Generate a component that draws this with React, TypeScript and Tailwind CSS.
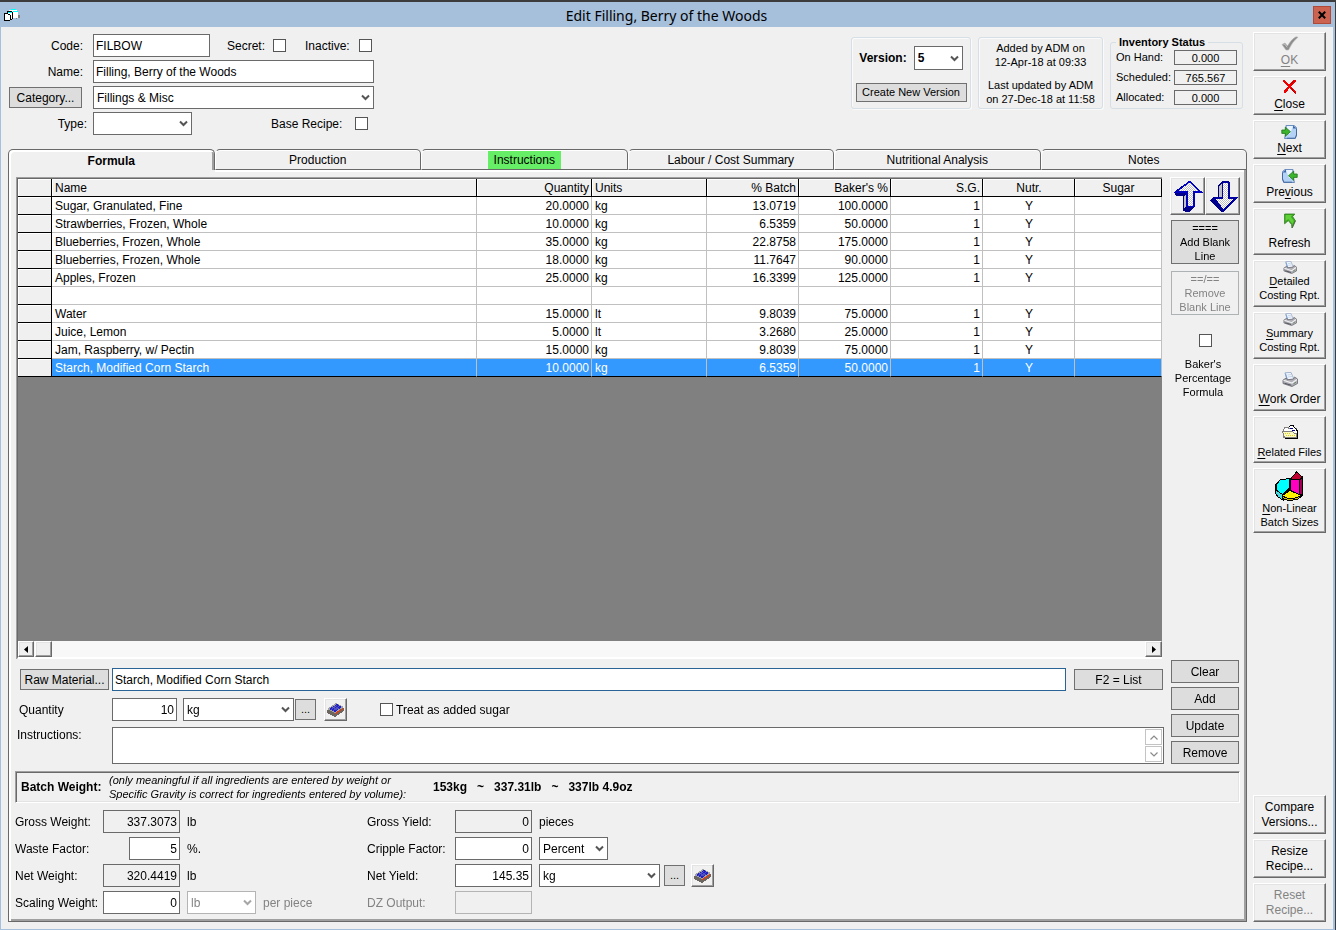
import { useId, type ReactNode } from 'react';
import { clsx } from 'clsx';

const RAISED =
    'border border-t-white border-l-white border-r-[#696969] border-b-[#696969] bg-[#f0f0f0] shadow-[inset_-1px_-1px_#a0a0a0,inset_1px_1px_#e3e3e3]';
const FLAT_BUTTON = 'border border-[#707070] bg-[#dddddd] text-center';
const FIELD = 'h-[23px] min-w-0 border border-[#6a6a6a] bg-white outline-none';

type Ingredient = {
    name: string;
    quantity: string;
    units: string;
    batch: string;
    bakers: string;
};

const INGREDIENTS: (Ingredient | null)[] = [
    { name: 'Sugar, Granulated, Fine', quantity: '20.0000', units: 'kg', batch: '13.0719', bakers: '100.0000' },
    { name: 'Strawberries, Frozen, Whole', quantity: '10.0000', units: 'kg', batch: '6.5359', bakers: '50.0000' },
    { name: 'Blueberries, Frozen, Whole', quantity: '35.0000', units: 'kg', batch: '22.8758', bakers: '175.0000' },
    { name: 'Blueberries, Frozen, Whole', quantity: '18.0000', units: 'kg', batch: '11.7647', bakers: '90.0000' },
    { name: 'Apples, Frozen', quantity: '25.0000', units: 'kg', batch: '16.3399', bakers: '125.0000' },
    null,
    { name: 'Water', quantity: '15.0000', units: 'lt', batch: '9.8039', bakers: '75.0000' },
    { name: 'Juice, Lemon', quantity: '5.0000', units: 'lt', batch: '3.2680', bakers: '25.0000' },
    { name: 'Jam, Raspberry, w/ Pectin', quantity: '15.0000', units: 'kg', batch: '9.8039', bakers: '75.0000' },
    { name: 'Starch, Modified Corn Starch', quantity: '10.0000', units: 'kg', batch: '6.5359', bakers: '50.0000' },
];
const SELECTED_ROW = 9;

const COLUMNS = [
    { title: '', width: 'w-[34px]', align: 'text-left' },
    { title: 'Name', width: '', align: 'text-left' },
    { title: 'Quantity', width: 'w-[115px]', align: 'text-right' },
    { title: 'Units', width: 'w-[115px]', align: 'text-left' },
    { title: '% Batch', width: 'w-[92px]', align: 'text-right' },
    { title: "Baker's %", width: 'w-[92px]', align: 'text-right' },
    { title: 'S.G.', width: 'w-[92px]', align: 'text-right' },
    { title: 'Nutr.', width: 'w-[92px]', align: 'text-center' },
    { title: 'Sugar', width: 'w-[87px]', align: 'text-center' },
];

const TABS = ['Formula', 'Production', 'Instructions', 'Labour / Cost Summary', 'Nutritional Analysis', 'Notes'];

/* ---------- icons ---------- */

function WindowIcon() {
    return (
        <svg width="16" height="14" viewBox="0 0 16 14" shapeRendering="crispEdges">
            <path d="M5 2h8v2h1v6H9V5H5z" fill="#fff" />
            <path d="M7 1h5v1H7zM9 3h5v1H9z" fill="#0ff" />
            <path d="M12 10h1v1h-1zM14 7h2v3h-2z" fill="#808080" />
            <path d="M3 4h5v8H6v1H1V5h2z" fill="#fff" />
            <path d="M3 3h5v1H3zM1 5h2v1H1zM0 5h1v8H0zM1 12h5v1H1zM8 4h1v7H8zM6 11h2v1H6zM3 4h1v2H3zM4 6h2v1H4zM6 7h1v5H6z" fill="#000" />
            <path d="M4 4h4v1H4z" fill="#0ff" />
        </svg>
    );
}

function CheckIcon() {
    return (
        <svg width="18" height="16" viewBox="0 0 18 16">
            <path d="M1 8.500 4 7l2.500 3Q10 3.500 15 .8l2 .4Q11 6 7.500 14L5 14z" fill="#8c8c8c" stroke="#b5b5b5" strokeWidth=".6" />
            <path d="m2.500 8.600 1.300-.5 2.400 3.200" fill="none" stroke="#c9c9c9" />
        </svg>
    );
}

function CrossIcon() {
    return (
        <svg width="14" height="14" viewBox="0 0 14 14" shapeRendering="crispEdges">
            <path d="M0 0h2l4 4.500L11 0h2v1L8 6l5 6v2h-1L6.500 8 3 12.500H1V11l4-4.500L0 1.500z" fill="#f00000" />
            <path d="m8 8 4 5M11 1 8 4" stroke="#900000" strokeWidth=".8" />
        </svg>
    );
}

function PageArrowIcon({ back = false }: { back?: boolean }) {
    return (
        <svg width="17" height="16" viewBox="0 0 17 16">
            <g transform={back ? 'matrix(-1 0 0 1 17 0)' : undefined}>
                <path d="M5 1.500h8l2.500 2V11l-1.300 3.500H3.500L5 9z" fill="#b4d2f6" stroke="#6d8fc0" />
                <path d="M6 2h6l-3 8H6z" fill="#eaf4ff" />
                <path d="M12 1.500v3h3.500z" fill="#3f66a8" />
                <path d="M15.500 5v6l-1.200 3.200H6" fill="none" stroke="#44699f" />
                <path d="M.8 6h3.500V3.200L9.500 7.700l-5.200 4.600V9.400H.8z" fill="#3cb52c" stroke="#1d7417" strokeWidth=".8" />
            </g>
        </svg>
    );
}

function RefreshIcon() {
    return (
        <svg width="12" height="16" viewBox="0 0 12 16">
            <path d="M.6 1h10.200L8.600 3.600l2.800 4.200L8 15 7.600 11.500 4.300 7.600.6 10.800z" fill="#3dac20" stroke="#2c7a1c" strokeWidth=".8" />
            <path d="M1.600 2h6.600L6.800 3.700l3 4.300-1.300 3L4.300 6 1.600 8z" fill="#5fd038" />
            <path d="m8.200 15 3.200-7.200" stroke="#5a5a5a" strokeWidth=".8" />
        </svg>
    );
}

function PrinterIcon() {
    return (
        <svg width="16" height="15" viewBox="0 0 16 15">
            <path d="M3 .8 9 .4l3 7L5 8z" fill="#f1f6fd" stroke="#8fa4c4" strokeWidth=".8" />
            <path d="m3.400 1.600 2 6" stroke="#7fa2d8" strokeWidth="1.200" />
            <path d="m5.500 3 3.500-.4M6 5l4-.5" stroke="#b9c9e2" strokeWidth=".8" />
            <path d="M1 8 4.300 6l1 1.800L11.500 7l1-2 3 2v4.500L10 14.500 1 11.500z" fill="#b0b0b6" stroke="#66666e" strokeWidth=".8" />
            <path d="m1.500 8.300 8.500 2.800 5-3.600" fill="none" stroke="#f2f2f6" strokeWidth="1.200" />
            <path d="m2.500 10.700 6.800 2.100v1L2.500 11.800z" fill="#55555e" />
            <path d="M11.500 11.800 14 10.200" stroke="#6d8a6a" />
        </svg>
    );
}

function FilesIcon() {
    return (
        <svg width="16" height="14" viewBox="0 0 16 14" shapeRendering="crispEdges">
            <path d="M1.500 12.500v-8L3 2.500h3l1 1h7v9z" fill="#fff" stroke="#808080" />
            <path d="m7 2 2-1.500h2L15.500 6v5" fill="#fff" stroke="#000" />
            <path d="M8 3.500h3M10 5.500h3" stroke="#00007f" />
            <path d="M.5 6.500h10l2 2H14v4H2.500z" fill="#fbf9c0" stroke="#808080" />
            <path d="M3 8h1M5 8h1M7 8h1M4 10h1M6 10h1M8 10h1M10 10h1M12 10h1" stroke="#d8d020" />
            <path d="M3 13h12V8" fill="none" stroke="#000" />
        </svg>
    );
}

function PieIcon() {
    return (
        <svg width="30" height="30" viewBox="0 0 30 30" shapeRendering="crispEdges">
            <path d="m21.500 1 6 5v18l-4 2-8-4 .5-14z" fill="#a00050" stroke="#000" />
            <path d="M15 8.500h9.500V25L15 20z" fill="#ff00c0" stroke="#000" />
            <path d="M15 8.500 21.500 1l6 5-3 3z" fill="#c00030" stroke="#000" />
            <path d="M14.500 7.500v10L8 23.500V29l-5-3-2.500-4v-8L5 9z" fill="#48d8e0" stroke="#000" />
            <path d="M14.500 7.500v9.500L7.500 23.500 1 19v-5L5 9z" fill="#00ffff" stroke="#000" />
            <path d="m7 25 7.500-6L23 23l4 1v1l-5 3.500-8 1-7-2z" fill="#d8c800" stroke="#000" />
            <path d="m7 25 7.500-5.500L27 24.500 20 27h-8z" fill="#fff200" stroke="#000" />
        </svg>
    );
}

function BlockArrowIcon({ down = false }: { down?: boolean }) {
    return (
        <svg width="30" height="33" viewBox="0 0 30 33" shapeRendering="crispEdges" className="shrink-0">
            <defs>
                <pattern id="dither" width="2" height="2" patternUnits="userSpaceOnUse">
                    <path d="M0 0h2v2H0z" fill="#fff" />
                    <path d="M0 0h1v1H0zM1 1h1v1H1z" fill="#c0c0c0" />
                </pattern>
            </defs>
            {down ? (
                <>
                    <path d="M10 5 14 1h7v18h-4L15 32h-2L2 20l3-3h5z" fill="#00008b" />
                    <path d="M10.500 6 14 3v15h-3.500z" fill="#c0c0c0" stroke="#00007f" />
                    <path d="M14.500 2.500h6.500v15.500h7L15.500 30.500 6 18h8.500z" fill="url(#dither)" stroke="#0000a0" strokeWidth="1.500" />
                </>
            ) : (
                <>
                    <path d="m16 1-15 11 2 4h7v15l3 1h3l6-5V12z" fill="#00008b" />
                    <path d="M10.500 16 14 12.500V26l-3.500 4z" fill="#c0c0c0" stroke="#00007f" />
                    <path d="M16.500 1.500 28 12h-7v14.500h-7V12H3z" fill="url(#dither)" stroke="#0000c0" strokeWidth="1.500" />
                </>
            )}
        </svg>
    );
}

function ConvertIcon() {
    return (
        <svg width="17" height="14" viewBox="0 0 17 14" shapeRendering="crispEdges">
            <path d="M0 7 9 1l8 4v3l-9 6-8-4z" fill="#6b6660" />
            <path d="M0 6 9 0l8 4-9 6z" fill="#a3a3a3" />
            <path d="m2 6 8-5 5 3-7 5z" fill="#2020c8" />
            <path d="m5 4 5 3M7 3l5 3M10 2 4 7M12 3 6 8" stroke="#7070b8" strokeWidth=".6" />
            <path d="m8 10 8-5v1.500l-8 5z" fill="#d84018" />
        </svg>
    );
}

function Chevron() {
    return (
        <svg width="9" height="7" viewBox="0 0 9 7" className="pointer-events-none col-start-1 row-start-1 mr-1 self-center justify-self-end">
            <path d="m1 1.500 3.500 3.500L8 1.500" fill="none" stroke="currentColor" strokeWidth="2" />
        </svg>
    );
}

/* ---------- controls ---------- */

function Select({ id, value, label, className, disabled }: { id?: string; value: string; label?: string; className?: string; disabled?: boolean }) {
    return (
        <span className={clsx('inline-grid shrink-0', disabled ? 'text-[#a6a6a6]' : 'text-[#555]', className)}>
            <select
                id={id}
                aria-label={label}
                disabled={disabled}
                className={clsx(
                    'col-start-1 row-start-1 w-full appearance-none border bg-white pl-[3px] outline-none disabled:opacity-100',
                    disabled ? 'border-[#b4b4b4] text-[#838383]' : 'border-[#6a6a6a] text-black',
                )}
            >
                <option>{value}</option>
            </select>
            <Chevron />
        </span>
    );
}

function Check({ id, className }: { id: string; className?: string }) {
    return (
        <input
            id={id}
            type="checkbox"
            className={clsx('size-[13px] shrink-0 appearance-none border border-[#555] bg-white checked:bg-[#555]', className)}
        />
    );
}

function MoreButton({ label }: { label: string }) {
    return (
        <button type="button" aria-label={label} className={clsx(FLAT_BUTTON, 'h-[21px] w-[21px] shrink-0 text-[11px]')}>
            ...
        </button>
    );
}

function ConvertButton({ label }: { label: string }) {
    return (
        <button type="button" aria-label={label} className={clsx(RAISED, 'flex size-[23px] shrink-0 items-center justify-center')}>
            <ConvertIcon />
        </button>
    );
}

function AmountRow({
    label,
    value,
    readOnly,
    disabled,
    narrow,
    children,
}: {
    label: string;
    value: string;
    readOnly?: boolean;
    disabled?: boolean;
    narrow?: boolean;
    children?: ReactNode;
}) {
    const id = useId();
    return (
        <div className="flex h-[23px] items-center">
            <label htmlFor={id} className={clsx('w-[88px] shrink-0 whitespace-nowrap', disabled && 'text-[#838383]')}>
                {label}
            </label>
            <div className="mr-[7px] flex w-[77px] shrink-0 justify-end">
                <input
                    id={id}
                    defaultValue={value}
                    readOnly={readOnly}
                    disabled={disabled}
                    className={clsx(
                        'h-[23px] border pr-0.5 text-right outline-none',
                        narrow ? 'w-[51px]' : 'w-full',
                        readOnly || disabled ? 'bg-[#f0f0f0]' : 'bg-white',
                        disabled ? 'border-[#b4b4b4]' : 'border-[#6a6a6a]',
                    )}
                />
            </div>
            {children}
        </div>
    );
}

function SideButton({ icon, disabled, className, children }: { icon?: ReactNode; disabled?: boolean; className: string; children: ReactNode }) {
    return (
        <button
            type="button"
            disabled={disabled}
            className={clsx(RAISED, 'flex shrink-0 flex-col items-center justify-center', disabled && 'text-[#838383]', className)}
        >
            {icon}
            <span>{children}</span>
        </button>
    );
}

function Key({ children }: { children: string }) {
    return <span className="underline underline-offset-2">{children}</span>;
}

/* ---------- sections ---------- */

function TitleBar() {
    return (
        <header className="flex h-[25px] shrink-0 items-center bg-[#a6bfdb] pr-0.5 pl-[3px]">
            <WindowIcon />
            <h1 className="flex-1 pt-0.5 text-center font-['Noto_Sans','Open_Sans',sans-serif] text-sm">Edit Filling, Berry of the Woods</h1>
            <button type="button" aria-label="Close window" className="flex size-[18px] items-center justify-center border border-[#b04a38] bg-[#cb6350]">
                <svg width="8" height="8" viewBox="0 0 8 8">
                    <path d="m.8.8 6.400 6.400M7.200.8.8 7.200" stroke="#000" strokeWidth="2" />
                </svg>
            </button>
        </header>
    );
}

function RecipeHeader() {
    const rowLabel = 'mr-2.5 w-[74px] shrink-0 text-right';
    return (
        <div className="flex flex-col gap-[3px]">
            <div className="flex items-center">
                <label htmlFor="code" className={rowLabel}>Code:</label>
                <input id="code" defaultValue="FILBOW" className={clsx(FIELD, 'w-[117px] pl-0.5')} />
                <label htmlFor="secret" className="mr-2 ml-[17px]">Secret:</label>
                <Check id="secret" />
                <label htmlFor="inactive" className="mr-[9px] ml-[19px]">Inactive:</label>
                <Check id="inactive" />
            </div>
            <div className="flex items-center">
                <label htmlFor="name" className={rowLabel}>Name:</label>
                <input id="name" defaultValue="Filling, Berry of the Woods" className={clsx(FIELD, 'w-[281px] pl-0.5')} />
            </div>
            <div className="flex items-center">
                <button type="button" className={clsx(FLAT_BUTTON, 'mr-[11px] h-[21px] w-[73px]')}>Category...</button>
                <Select label="Category" value="Fillings &amp; Misc" className="h-[23px] w-[281px]" />
            </div>
            <div className="flex items-center">
                <label htmlFor="type" className="mr-1.5 w-[78px] text-right">Type:</label>
                <Select id="type" value="" className="h-[23px] w-[99px]" />
                <label htmlFor="base" className="mr-[13px] ml-[79px]">Base Recipe:</label>
                <Check id="base" />
            </div>
        </div>
    );
}

function StatusBoxes() {
    const box = 'rounded-[3px] border border-[#d5dfe5] shadow-[inset_1px_1px_#fafafa,1px_1px_#fafafa]';
    return (
        <div className="flex items-end gap-[7px] text-[11px]">
            <div className={clsx(box, 'flex h-[72px] w-[120px] flex-col items-center justify-between pt-2 pb-1.5')}>
                <div className="flex items-center gap-[7px] text-xs font-bold">
                    <label htmlFor="version">Version:</label>
                    <Select id="version" value="5" className="h-6 w-[49px]" />
                </div>
                <button type="button" className={clsx(FLAT_BUTTON, 'h-[19px] w-[111px] whitespace-nowrap')}>Create New Version</button>
            </div>
            <div className={clsx(box, 'flex h-[72px] w-[125px] flex-col justify-center gap-[9px] text-center leading-[14px]')}>
                <p>Added by ADM on<br />12-Apr-18 at 09:33</p>
                <p>Last updated by ADM<br />on 27-Dec-18 at 11:58</p>
            </div>
            <fieldset className="w-[133px] rounded-[3px] border border-[#d5dfe5] px-[5px] pb-[3px]">
                <legend className="px-[3px] leading-[14px] font-bold">Inventory Status</legend>
                <div className="flex flex-col gap-[5px] pt-px">
                    {[
                        ['On Hand:', '0.000'],
                        ['Scheduled:', '765.567'],
                        ['Allocated:', '0.000'],
                    ].map(([label, value]) => (
                        <div key={label} className="flex items-center justify-between">
                            <label htmlFor={label}>{label}</label>
                            <input id={label} readOnly defaultValue={value} className="h-[15px] w-[63px] border border-[#6a6a6a] bg-[#f0f0f0] text-center outline-none" />
                        </div>
                    ))}
                </div>
            </fieldset>
        </div>
    );
}

function Tabs() {
    return (
        <div role="tablist" className="flex h-[21px] shrink-0">
            {TABS.map((tab, i) => (
                <button
                    key={tab}
                    type="button"
                    role="tab"
                    aria-selected={i === 0}
                    className={clsx(
                        'flex grow basis-[206px] items-center justify-center rounded-t-[5px] border-t border-r border-[#696969]',
                        i === 0
                            ? 'border-l pt-0.5 font-bold shadow-[inset_2px_2px_#fff,inset_-2px_0_#a0a0a0]'
                            : 'border-b border-l border-l-white shadow-[inset_0_1px_#fff,0_2px_#fff]',
                    )}
                >
                    {tab === 'Instructions' ? <span className="bg-[#66ee66] px-1.5 leading-[18px]">{tab}</span> : tab}
                </button>
            ))}
        </div>
    );
}

function IngredientGrid() {
    return (
        <div className="mr-0.5 flex min-h-[300px] flex-1 flex-col border-t border-l border-[#a0a0a0]">
            <div className="flex flex-1 flex-col border-t border-l border-t-[#696969] border-l-[#696969] border-b-2 border-b-white">
                <div className="flex-1 bg-[#808080]">
                    <table className="w-full table-fixed border-separate border-spacing-0 leading-4">
                        <thead>
                            <tr>
                                {COLUMNS.map((c, i) => (
                                    <th
                                        key={i}
                                        scope="col"
                                        className={clsx(
                                            'h-[18px] border-r border-b border-black bg-[#f0f0f0] p-0 pt-px pr-0.5 pl-[3px] font-normal shadow-[inset_1px_1px_#fff]',
                                            c.width,
                                            c.align,
                                        )}
                                    >
                                        {c.title}
                                    </th>
                                ))}
                            </tr>
                        </thead>
                        <tbody>
                            {INGREDIENTS.map((item, row) => {
                                const selected = row === SELECTED_ROW;
                                const cells = item
                                    ? ['', item.name, item.quantity, item.units, item.batch, item.bakers, '1', 'Y', '']
                                    : COLUMNS.map(() => '');
                                return (
                                    <tr key={row} aria-selected={selected}>
                                        {cells.map((text, i) => (
                                            <td
                                                key={i}
                                                className={clsx(
                                                    'h-[18px] overflow-hidden border-r border-b p-0 pt-px pr-0.5 pl-[3px] whitespace-nowrap',
                                                    COLUMNS[i].align,
                                                    i === 0
                                                        ? 'border-black bg-[#f0f0f0] shadow-[inset_1px_1px_#fff]'
                                                        : selected
                                                          ? 'border-r-[#c0c0c0] border-b-black bg-[#3399ff] text-white'
                                                          : 'border-[#c0c0c0] bg-white',
                                                )}
                                            >
                                                {text}
                                            </td>
                                        ))}
                                    </tr>
                                );
                            })}
                        </tbody>
                    </table>
                </div>
                <div className="flex h-4 gap-px bg-[#f8f8f8]">
                    <button type="button" aria-label="Scroll left" className={clsx(RAISED, 'flex w-4 items-center justify-center')}>
                        <svg width="4" height="7" viewBox="0 0 4 7"><path d="M4 0v7L0 3.500z" /></svg>
                    </button>
                    <div className={clsx(RAISED, 'w-[17px]')} />
                    <button type="button" aria-label="Scroll right" className={clsx(RAISED, 'ml-auto flex w-[17px] items-center justify-center')}>
                        <svg width="4" height="7" viewBox="0 0 4 7"><path d="M0 0v7l4-3.500z" /></svg>
                    </button>
                </div>
            </div>
        </div>
    );
}

function IngredientForm() {
    return (
        <div className="flex flex-col">
            <div className="mt-[9px] flex items-center">
                <button type="button" className={clsx(FLAT_BUTTON, 'mr-[3px] ml-1 h-[21px] w-[89px] whitespace-nowrap')}>Raw Material...</button>
                <input
                    aria-label="Raw Material"
                    autoFocus
                    onFocus={(e) => e.target.setSelectionRange(e.target.value.length, e.target.value.length)}
                    defaultValue="Starch, Modified Corn Starch"
                    className="h-[23px] min-w-0 flex-1 border border-[#2a6496] bg-white pl-0.5 outline-none"
                />
                <button type="button" className={clsx(FLAT_BUTTON, 'mr-px ml-2 h-[21px] w-[89px]')}>F2 = List</button>
            </div>
            <div className="mt-[7px] flex items-center">
                <label htmlFor="qty" className="w-24 pl-[3px]">Quantity</label>
                <input id="qty" defaultValue="10" className={clsx(FIELD, 'mr-1.5 w-[65px] pr-0.5 text-right')} />
                <Select label="Quantity units" value="kg" className="mr-px h-[23px] w-[111px]" />
                <MoreButton label="More units" />
                <span className="ml-2"><ConvertButton label="Convert quantity" /></span>
                <span className="ml-[33px] flex items-center gap-[3px]">
                    <Check id="added-sugar" />
                    <label htmlFor="added-sugar">Treat as added sugar</label>
                </span>
            </div>
            <div className="mt-1.5 flex">
                <label htmlFor="instructions" className="w-24 pl-px">Instructions:</label>
                <div className="flex h-[37px] flex-1 border border-[#6a6a6a] bg-white p-px">
                    <textarea id="instructions" className="flex-1 resize-none outline-none" />
                    <div className="flex w-[17px] flex-col gap-px text-[#8a8a8a]">
                        <button type="button" aria-label="Scroll up" className="flex flex-1 items-center justify-center border border-[#c4c4c4]">
                            <svg width="8" height="5" viewBox="0 0 8 5"><path d="m.5 4.500 3.500-3.500 3.500 3.500" fill="none" stroke="currentColor" strokeWidth="1.200" /></svg>
                        </button>
                        <button type="button" aria-label="Scroll down" className="flex flex-1 items-center justify-center border border-[#c4c4c4]">
                            <svg width="8" height="5" viewBox="0 0 8 5"><path d="m.5.5 3.500 3.500L7.500.5" fill="none" stroke="currentColor" strokeWidth="1.200" /></svg>
                        </button>
                    </div>
                </div>
            </div>
        </div>
    );
}

function GridActions() {
    return (
        <div className="flex w-[70px] shrink-0 flex-col items-center text-[11px] leading-[14px]">
            <div className="flex w-full">
                <button type="button" aria-label="Move line up" className={clsx(RAISED, 'flex h-[38px] flex-1 items-center justify-center')}>
                    <BlockArrowIcon />
                </button>
                <button type="button" aria-label="Move line down" className={clsx(RAISED, 'flex h-[38px] flex-1 items-center justify-center')}>
                    <BlockArrowIcon down />
                </button>
            </div>
            <button type="button" className={clsx(FLAT_BUTTON, 'mt-[5px] h-11 w-[68px]')}>====<br />Add Blank<br />Line</button>
            <button type="button" disabled className="mt-[7px] h-11 w-[68px] border border-[#adb2b5] text-[#838383]">==/==<br />Remove<br />Blank Line</button>
            <Check id="bakers" className="mt-[19px]" />
            <label htmlFor="bakers" className="mt-2.5 pr-1 text-center">Baker's<br />Percentage<br />Formula</label>
            <div className="mt-auto flex w-[68px] flex-col gap-1 text-xs">
                {['Clear', 'Add', 'Update', 'Remove'].map((action) => (
                    <button key={action} type="button" className={clsx(FLAT_BUTTON, 'h-[23px]')}>{action}</button>
                ))}
            </div>
        </div>
    );
}

function BatchWeight() {
    return (
        <div className="mt-[7px] flex h-8 items-center border border-t-[#a0a0a0] border-l-[#a0a0a0] border-r-white border-b-white pl-[5px] font-bold shadow-[inset_1px_1px_#696969,inset_-1px_-1px_#e3e3e3]">
            <span className="w-[88px]">Batch Weight:</span>
            <p className="w-[324px] text-[11px] leading-[14px] font-normal italic">
                (only meaningful if all ingredients are entered by weight or<br />
                Specific Gravity is correct for ingredients entered by volume):
            </p>
            <span className="flex gap-2.5">
                <span>153kg</span><span>~</span><span>337.31lb</span><span>~</span><span>337lb 4.9oz</span>
            </span>
        </div>
    );
}

function Totals() {
    return (
        <div className="mt-[7px] flex">
            <div className="flex w-[352px] flex-col gap-1">
                <AmountRow label="Gross Weight:" value="337.3073" readOnly>lb</AmountRow>
                <AmountRow label="Waste Factor:" value="5" narrow>%.</AmountRow>
                <AmountRow label="Net Weight:" value="320.4419" readOnly>lb</AmountRow>
                <AmountRow label="Scaling Weight:" value="0">
                    <Select label="Scaling units" value="lb" disabled className="mr-[7px] h-[23px] w-[69px]" />
                    <span className="text-[#838383]">per piece</span>
                </AmountRow>
            </div>
            <div className="flex flex-col gap-1">
                <AmountRow label="Gross Yield:" value="0" readOnly>pieces</AmountRow>
                <AmountRow label="Cripple Factor:" value="0">
                    <Select label="Cripple unit" value="Percent" className="h-[23px] w-[69px]" />
                </AmountRow>
                <AmountRow label="Net Yield:" value="145.35">
                    <Select label="Net yield units" value="kg" className="mr-1 h-[23px] w-[121px]" />
                    <MoreButton label="More yield units" />
                    <span className="ml-1.5"><ConvertButton label="Convert yield" /></span>
                </AmountRow>
                <AmountRow label="DZ Output:" value="" disabled />
            </div>
        </div>
    );
}

function Sidebar() {
    return (
        <aside className="flex w-[73px] shrink-0 flex-col gap-[5px] pt-[5px] leading-4">
            <SideButton className="h-[39px]" disabled icon={<CheckIcon />}><Key>O</Key>K</SideButton>
            <SideButton className="h-[39px] gap-0.5" icon={<CrossIcon />}><Key>C</Key>lose</SideButton>
            <SideButton className="h-[39px]" icon={<PageArrowIcon />}><Key>N</Key>ext</SideButton>
            <SideButton className="h-[39px]" icon={<PageArrowIcon back />}>Pre<Key>v</Key>ious</SideButton>
            <SideButton className="h-[47px] gap-1.5" icon={<RefreshIcon />}>Refresh</SideButton>
            <SideButton className="h-[47px] pb-1 text-[11px] leading-[14px]" icon={<PrinterIcon />}><Key>D</Key>etailed<br />Costing Rpt.</SideButton>
            <SideButton className="h-[47px] pb-1 text-[11px] leading-[14px]" icon={<PrinterIcon />}><Key>S</Key>ummary<br />Costing Rpt.</SideButton>
            <SideButton className="h-[47px] gap-1 pt-1" icon={<PrinterIcon />}><Key>W</Key>ork Order</SideButton>
            <SideButton className="h-[47px] gap-1.5 pt-1 text-[11px] leading-[14px]" icon={<FilesIcon />}><Key>R</Key>elated Files</SideButton>
            <SideButton className="h-[65px] pb-0.5 text-[11px] leading-[14px]" icon={<PieIcon />}><Key>N</Key>on-Linear<br />Batch Sizes</SideButton>
            <SideButton className="mt-auto h-[39px] leading-[15px]">Compare<br />Versions...</SideButton>
            <SideButton className="h-[39px] leading-[15px]">Resize<br />Recipe...</SideButton>
            <SideButton className="h-[39px] leading-[15px]" disabled>Reset<br />Recipe...</SideButton>
        </aside>
    );
}

export default function App() {
    return (
        <div className="flex min-h-screen flex-col border-t-2 border-r border-[#3c3c3c] bg-[#f0f0f0] font-['Liberation_Sans',Arial,sans-serif] text-xs text-black">
            <div className="flex flex-1 flex-col border-r-2 border-b border-l border-[#a6bfdb]">
                <TitleBar />
                <div className="flex flex-1 gap-1.5 pr-[7px] pb-[7px] pl-[7px]">
                    <main className="flex min-w-0 flex-1 flex-col">
                        <div className="flex items-start justify-between pt-1 pr-1 pb-3.5 pl-px">
                            <div className="pt-[3px]"><RecipeHeader /></div>
                            <div className="pt-1"><StatusBoxes /></div>
                        </div>
                        <Tabs />
                        <section className="flex flex-1 flex-col border-r border-b border-l border-[#696969] pt-[7px] pr-1.5 pb-[7px] pl-1.5 shadow-[inset_2px_0_#fff,inset_-2px_-2px_#a0a0a0]">
                            <div className="flex flex-1 gap-1.5 pl-px">
                                <div className="flex min-w-0 flex-1 flex-col">
                                    <IngredientGrid />
                                    <IngredientForm />
                                </div>
                                <GridActions />
                            </div>
                            <BatchWeight />
                            <Totals />
                        </section>
                    </main>
                    <Sidebar />
                </div>
            </div>
        </div>
    );
}
